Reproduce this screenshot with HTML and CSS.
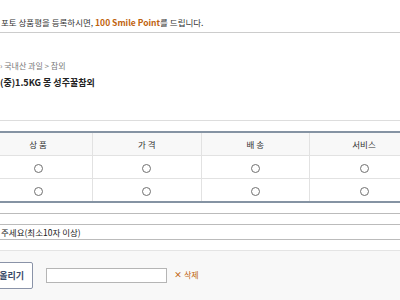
FILE: index.html
```html
<!DOCTYPE html>
<html>
    <head>
        <meta charset="UTF-8" />
        <title>상품평 쓰기</title>
        <link rel="stylesheet" href="styles.css">
    </head>
    <body>
    <div class="notice">
        <p class="notice-text">포토 상품평을 등록하시면, <b class="point">100 Smile Point</b>를 드립니다.</p>
    </div>

    <div class="product">
        <p class="crumb">› 국내산 과일 &gt; 참외</p>
        <p class="product-name">(중)1.5KG 몽 성주꿀참외</p>
    </div>

    <div class="rating">
        <table class="rating-table">
            <tr class="head">
                <th>상 품</th>
                <th>가 격</th>
                <th>배 송</th>
                <th>서비스</th>
            </tr>
            <tr>
                <td><span class="radio"></span></td>
                <td><span class="radio"></span></td>
                <td><span class="radio"></span></td>
                <td><span class="radio"></span></td>
            </tr>
            <tr>
                <td><span class="radio"></span></td>
                <td><span class="radio"></span></td>
                <td><span class="radio"></span></td>
                <td><span class="radio"></span></td>
            </tr>
        </table>
    </div>

    <div class="write">
        <div class="title-box"></div>
        <div class="text-box">주세요(최소10자 이상)</div>
    </div>

    <div class="photo">
        <button class="upload">올리기</button>
        <input class="file-name" type="text">
        <span class="delete"><span class="x">×</span>삭제</span>
    </div>
    </body>
</html>
```

FILE: styles.css
```css
body {
    margin: 0;
    font-family: "Noto Sans CJK KR", "Noto Sans", sans-serif;
    font-size: 8px;
    color: #333;
    background: #fff;
    overflow: hidden;
}
p {
    margin: 0;
}
.notice {
    height: 32px;
    border-bottom: 1px solid #ccc;
}
.notice-text {
    padding-top: 15px;
    padding-left: 1px;
    line-height: 14px;
    font-size: 8.5px;
    color: #333;
}
.point {
    color: #c0630e;
}
.product {
    height: 87px;
    border-bottom: 1px solid #ddd;
}
.crumb {
    padding-top: 26px;
    line-height: 14px;
    color: #777;
}
.product-name {
    margin-top: 3px;
    line-height: 14px;
    font-size: 9px;
    font-weight: bold;
    color: #222;
}
.rating {
    padding-top: 10px;
    margin-left: -16px;
}
.rating-table {
    width: 434px;
    border-collapse: collapse;
    border-top: 2px solid #8593a3;
    border-bottom: 2px solid #8593a3;
    table-layout: fixed;
}
.rating-table th,
.rating-table td {
    text-align: center;
    border-left: 1px solid #e2e2e2;
    border-bottom: 1px solid #e2e2e2;
    height: 22px;
    padding: 0;
}
.rating-table th:first-child,
.rating-table td:first-child {
    border-left: none;
}
.rating-table th {
    font-size: 8.5px;
    font-weight: normal;
    color: #333;
    background: #f8f8f8;
}
.radio {
    display: inline-block;
    width: 7px;
    height: 7px;
    border: 1px solid #707070;
    border-radius: 50%;
    vertical-align: middle;
    background: #fff;
}
.write {
    padding-top: 10px;
    border-bottom: 1px solid #e4e4e4;
}
.title-box {
    height: 10px;
    border-top: 1px solid #bbb;
    border-bottom: 1px solid #bbb;
}
.text-box {
    height: 14px;
    line-height: 14px;
    font-size: 8.5px;
    border-bottom: 1px solid #bbb;
    margin-bottom: 10px;
    color: #222;
    padding-left: 1px;
}
.photo {
    background: #f8f8f8;
    height: 41px;
    display: flex;
    align-items: flex-start;
    padding-top: 11px;
}
.upload {
    margin-left: -25px;
    width: 58px;
    height: 27px;
    border: 1px solid #8a93a8;
    border-radius: 2px;
    background: #fff;
    font-family: inherit;
    font-size: 9px;
    font-weight: bold;
    color: #3a4a6a;
    text-align: right;
    padding: 0 8px 0 0;
}
.file-name {
    margin-left: 13px;
    margin-top: 6px;
    width: 119px;
    height: 13px;
    border: 1px solid #b5b5b5;
    padding: 0;
    background: #fff;
}
.delete {
    margin-left: 7px;
    margin-top: 5px;
    color: #c0630e;
    line-height: 16px;
}
.x {
    margin-right: 2px;
    font-weight: bold;
}
```
